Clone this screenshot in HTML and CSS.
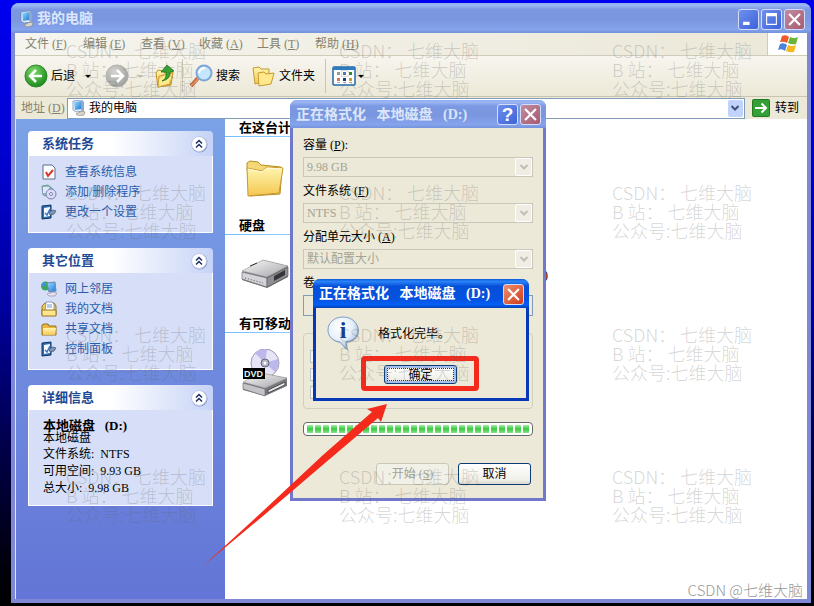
FILE: index.html
```html
<!DOCTYPE html>
<html lang="zh-CN">
<head>
<meta charset="UTF-8">
<title>我的电脑</title>
<link rel="stylesheet" href="styles.css">
</head>
<body>
<svg class="defs" width="0" height="0">
  <defs>
    <linearGradient id="paper" x1="0" y1="0" x2="0" y2="1"><stop offset="0" stop-color="#fff6b0"/><stop offset="1" stop-color="#f4c650"/></linearGradient>
    <linearGradient id="metal" x1="0" y1="0" x2="1" y2="1"><stop offset="0" stop-color="#fafafa"/><stop offset="1" stop-color="#a4a4a8"/></linearGradient>
    <linearGradient id="screen" x1="0" y1="0" x2="1" y2="1"><stop offset="0" stop-color="#9fe0ff"/><stop offset="1" stop-color="#1f78d8"/></linearGradient>
    <radialGradient id="green" cx=".4" cy=".3" r=".7"><stop offset="0" stop-color="#7fd86a"/><stop offset="1" stop-color="#1c8a1c"/></radialGradient>
    <radialGradient id="gray" cx=".4" cy=".3" r=".7"><stop offset="0" stop-color="#d4d4d0"/><stop offset="1" stop-color="#a0a09c"/></radialGradient>
    <radialGradient id="bubble" cx=".4" cy=".3" r=".7"><stop offset="0" stop-color="#fff"/><stop offset=".6" stop-color="#e6f0fa"/><stop offset="1" stop-color="#a4bfe0"/></radialGradient>
  </defs>
  <symbol id="computer" viewBox="0 0 16 16">
    <path d="M5 14l6-3 3 1-1 3-5 1z" fill="#d8d4cc" stroke="#8a8478" stroke-width=".6"/>
    <path d="M2 1l8-1 2 1v10l-7 1-3-2z" fill="#e8eef4" stroke="#6c86a8" stroke-width=".7"/>
    <path d="M3 2l7-1v8l-6 1z" fill="url(#screen)"/>
    <path d="M10 1l3 1v9l-3-1z" fill="#8fa8c8"/>
  </symbol>
  <symbol id="cross" viewBox="0 0 12 12"><path d="M1 1l10 10M11 1L1 11" stroke="#fff" stroke-width="2" fill="none"/></symbol>
  <symbol id="chevron" viewBox="0 0 10 10"><path d="M1.500 3L5 6.500 8.500 3" stroke="currentColor" stroke-width="2" fill="none"/></symbol>
  <symbol id="collapse" viewBox="0 0 18 18">
    <circle cx="9.500" cy="9.500" r="8" fill="#8a98c8"/>
    <circle cx="9" cy="9" r="7.500" fill="#fff" stroke="#c2cbe8"/>
    <path d="M6 8.500l3-3 3 3M6 12.500l3-3 3 3" stroke="#1c2f60" stroke-width="1.500" fill="none"/>
  </symbol>
  <symbol id="folder" viewBox="0 0 40 40">
    <path d="M2 10V6l3-2 8 1 3 3 20 2 1 2-2 25-30 2z" fill="#f4d878" stroke="#b88a20"/>
    <path d="M2 11l15 3 5-4 16 1-4 25-31 3z" fill="url(#paper)" stroke="#c89a30"/>
    <path d="M3 12l14 3 5-4 15 1" stroke="#fffbe0" fill="none"/>
  </symbol>
  <symbol id="control" viewBox="0 0 16 16">
    <path d="M1 2l9-1v13l-9 1z" fill="#2c6cb0" stroke="#12345c"/>
    <path d="M3 4l6-1v9l-6 1z" fill="#f4faff"/>
    <path d="M4 9l2 2 3-6" stroke="#3b78c8" stroke-width="1.500" fill="none"/>
    <path d="M8 8l4-2 3 1-2 3-4 1z" fill="#7d98b8" stroke="#3c4c64" stroke-width=".7"/>
  </symbol>
</svg>

<div class="window">
  <div class="titlebar">
    <svg class="title-icon"><use href="#computer"/></svg>
    <h1>我的电脑</h1>
    <button class="caption" aria-label="最小化"><svg viewBox="0 0 12 12"><path d="M1 9.500h6" stroke="#fff" stroke-width="3"/></svg></button>
    <button class="caption" aria-label="最大化"><svg viewBox="0 0 12 12"><path d="M1 1.500h10" stroke="#fff" stroke-width="3"/><path d="M1.500 1v9.500h9V1" stroke="#fff" fill="none"/></svg></button>
    <button class="caption close" aria-label="关闭"><svg><use href="#cross"/></svg></button>
  </div>

  <div class="menubar">
    <button>文件 (<u>F</u>)</button>
    <button>编辑 (<u>E</u>)</button>
    <button>查看 (<u>V</u>)</button>
    <button>收藏 (<u>A</u>)</button>
    <button>工具 (<u>T</u>)</button>
    <button>帮助 (<u>H</u>)</button>
    <div class="flag">
      <svg viewBox="0 0 20 18" width="20" height="18">
        <path d="M4 1q4-2 7 1l-2 6q-3-2-7-1z" fill="#ee5a2c"/>
        <path d="M12 2q4 2 8 0l-2 7q-4 1-8-1z" fill="#6cb436"/>
        <path d="M2 9q4-2 7 1l-2 6q-3-3-7-1z" fill="#4a82dc"/>
        <path d="M10 10q4 2 8 0l-2 7q-4 1-8-1z" fill="#f6b820"/>
      </svg>
    </div>
  </div>

  <div class="toolbar">
    <button class="tool back">
      <svg viewBox="0 0 24 24" width="24" height="24"><circle cx="12" cy="12" r="11" fill="url(#green)" stroke="#2f8a2c"/><path d="M18 12H7M12 6l-6 6 6 6" stroke="#fff" stroke-width="2.500" fill="none"/></svg>
      后退
    </button>
    <span class="drop"></span>
    <button class="tool forward" aria-label="前进">
      <svg viewBox="0 0 24 24" width="24" height="24"><circle cx="12" cy="12" r="11" fill="url(#gray)" stroke="#b0b0ac"/><path d="M6 12h11M12 6l6 6-6 6" stroke="#fff" stroke-width="2.500" fill="none"/></svg>
    </button>
    <span class="drop off"></span>
    <button class="tool up" aria-label="向上">
      <svg viewBox="0 0 22 24" width="22" height="24"><path d="M2 9l2-3 5 1 2 2 8-1-2 13-13 2z" fill="url(#paper)" stroke="#c09020"/><path d="M5 12l14-3-3 11-12 3z" fill="#ffe98c" stroke="#d0a030"/><path d="M8 17q5-2 4-9l-5 0 6-7 7 6-4 1q1 7-8 9z" fill="#35a62e" stroke="#1c701c" stroke-width=".8"/></svg>
    </button>
    <span class="rule"></span>
    <button class="tool search">
      <svg viewBox="0 0 24 24" width="24" height="24"><path d="M9 14l-7 8" stroke="#c4683a" stroke-width="4"/><path d="M10 14l-8 8" stroke="#e89a68" stroke-width="1.500"/><circle cx="15" cy="9" r="7.500" fill="#c4e6ff" stroke="#7ea6d8" stroke-width="2"/><path d="M10 9q1-5 6-5" stroke="#fff" stroke-width="2" fill="none"/></svg>
      搜索
    </button>
    <button class="tool folders">
      <svg viewBox="0 0 24 24" width="24" height="24"><path d="M1 4l6-1 2 2h8v11l-14 4z" fill="url(#paper)" stroke="#c09a30"/><path d="M6 9l6-1 2 2 8-1-3 11-12 2z" fill="#ffe98c" stroke="#c89a30"/></svg>
      文件夹
    </button>
    <span class="rule"></span>
    <button class="tool views" aria-label="查看">
      <svg viewBox="0 0 24 20" width="24" height="20">
        <rect x="1" y="1" width="22" height="18" rx="1" fill="#fff" stroke="#1e6aa8" stroke-width="1.500"/>
        <path d="M1 2.500h22" stroke="#2b7cc0" stroke-width="3"/>
        <path d="M5 7.500h3" stroke="#999" stroke-width="3"/><path d="M11 7.500h3" stroke="#4a7ab0" stroke-width="3"/><path d="M17 7.500h3" stroke="#2a8a3a" stroke-width="3"/>
        <path d="M5 13.500h3" stroke="#e07050" stroke-width="3"/><path d="M11 13.500h3" stroke="#163a8a" stroke-width="3"/><path d="M17 13.500h3" stroke="#c89a30" stroke-width="3"/>
        <path d="M5 16.500h3M11 16.500h3M17 16.500h3" stroke="#aaa"/>
      </svg>
    </button>
    <span class="drop"></span>
  </div>

  <div class="addressbar">
    <label for="address">地址 (<u>D</u>)</label>
    <div class="address">
      <svg><use href="#computer"/></svg>
      <input type="text" id="address" value="我的电脑">
      <button aria-label="展开"><svg width="10" height="10"><use href="#chevron"/></svg></button>
    </div>
    <button class="go">
      <svg viewBox="0 0 18 18" width="18" height="18"><rect x=".5" y=".5" width="17" height="17" rx="1" fill="#35a035" stroke="#1f7a22"/><path d="M3 9h11M9.500 4.500L14 9l-4.500 4.500" stroke="#fff" stroke-width="2" fill="none"/></svg>
      转到
    </button>
  </div>

  <div class="content">
    <div class="sidebar">
      <div class="panel">
        <h2>系统任务<svg width="18" height="18"><use href="#collapse"/></svg></h2>
        <ul>
          <li><svg viewBox="0 0 16 16"><path d="M2 1h9l3 3v11H2z" fill="#fdfdff" stroke="#5c6c8c"/><path d="M5 8l2 4 5-6" stroke="#d83a2a" stroke-width="2" fill="none"/></svg><a href="#">查看系统信息</a></li>
          <li><svg viewBox="0 0 16 16"><path d="M1 2l6-1 5 4-4 8-6-2z" fill="#8cc49c" stroke="#5c7c9c" stroke-width=".7"/><path d="M2 3h6v6H2z" fill="#e4e8ff"/><circle cx="10" cy="10" r="5" fill="#dcdcf8" stroke="#7880b0"/><circle cx="10" cy="10" r="1.500" fill="#fff" stroke="#7880b0"/></svg><a href="#">添加/删除程序</a></li>
          <li><svg><use href="#control"/></svg><a href="#">更改一个设置</a></li>
        </ul>
      </div>
      <div class="panel">
        <h2>其它位置<svg width="18" height="18"><use href="#collapse"/></svg></h2>
        <ul>
          <li><svg viewBox="0 0 16 16"><circle cx="4.500" cy="5" r="4.500" fill="#3aa860"/><path d="M0 5q2-4 5-4l-1 4z" fill="#4a90e0"/><path d="M6 2l8-1 1 9-7 1z" fill="url(#screen)" stroke="#6888b0"/><path d="M6 13l6-2 4 1-2 3H8z" fill="#e4e0f0" stroke="#8c88a0" stroke-width=".6"/></svg><a href="#">网上邻居</a></li>
          <li><svg viewBox="0 0 16 16"><path d="M1 5l3-3h9l2 3v9H1z" fill="#f0cc60" stroke="#9c7420"/><path d="M5 1h6l2 2v7H4z" fill="#fff" stroke="#6c88b0" stroke-width=".8"/><path d="M6 4h5M6 6h5" stroke="#6c9ad0"/><path d="M1 9h14v6H1z" fill="#ffe68c" stroke="#9c7420"/></svg><a href="#">我的文档</a></li>
          <li><svg viewBox="0 0 16 16"><path d="M1 4l2-1h4l1 2h7v9H1z" fill="#e8b840" stroke="#96701c"/><path d="M2 7h13l-1 7H2z" fill="url(#paper)"/></svg><a href="#">共享文档</a></li>
          <li><svg><use href="#control"/></svg><a href="#">控制面板</a></li>
        </ul>
      </div>
      <div class="panel">
        <h2>详细信息<svg width="18" height="18"><use href="#collapse"/></svg></h2>
        <div class="details">
          <strong>本地磁盘   (D:)</strong>
          <p class="kind">本地磁盘</p>
          <p>文件系统:  NTFS</p>
          <p>可用空间:  9.93 GB</p>
          <p>总大小:  9.98 GB</p>
        </div>
      </div>
    </div>

    <div class="files">
      <h3>在这台计</h3>
      <div class="group"><svg class="big folder" viewBox="0 0 40 40"><use href="#folder"/></svg></div>
      <h3>硬盘</h3>
      <div class="group">
        <svg class="big" viewBox="0 0 48 48">
          <path d="M1 21L22 9l25 6v11L26 37 1 29z" fill="#68686c"/>
          <path d="M1 20L22 9l25 6-21 11z" fill="url(#metal)" stroke="#a0a0a4" stroke-width=".7"/>
          <path d="M1 21l25 6v9L1 28z" fill="#d4d4d8" stroke="#77777c" stroke-width=".7"/>
          <path d="M26 27l21-11v9L26 36z" fill="#8e8e94" stroke="#5e5e62" stroke-width=".7"/>
          <path d="M33 25l11-6v5l-11 6z" fill="#34343a"/>
          <path d="M9 15l7-3" stroke="#333"/><path d="M4 27l18 5" stroke="#555" stroke-dasharray="1 2"/>
        </svg>
        <span class="drive-name">(D:)</span>
      </div>
      <h3>有可移动</h3>
      <div class="group">
        <svg class="big" viewBox="0 0 48 48">
          <circle cx="24" cy="14" r="14" fill="#e6e4f6" stroke="#9a98b4"/>
          <path d="M24 14L14 4q5-5 12-3zM24 14l10 9q5-6 3-13z" fill="#bdb8ec"/>
          <circle cx="24" cy="14" r="4" fill="#b4b4c4" stroke="#66667a"/><circle cx="24" cy="14" r="1.500" fill="#fff"/>
          <path d="M2 34l18-10 26 5v8L24 47 2 41z" fill="#7a7a7e"/>
          <path d="M2 33l18-9 26 5-22 10z" fill="url(#metal)" stroke="#a0a0a4" stroke-width=".7"/>
          <path d="M2 34l22 6v7L2 40z" fill="#c4c4c8" stroke="#6e6e74" stroke-width=".7"/>
          <path d="M27 41l17-8v3l-17 8z" fill="#e8e8ec" stroke="#4c4c50"/>
          <rect x="2" y="19" width="22" height="11" fill="#000"/>
          <text x="3" y="28" font-size="9" font-weight="bold" font-family="Liberation Sans" fill="#dff4f4">DVD</text>
        </svg>
      </div>
    </div>
  </div>
</div>

<div class="dialog format">
  <div class="titlebar">
    <h1>正在格式化   本地磁盘   (D:)</h1>
    <button class="caption help">?</button>
    <button class="caption close" aria-label="关闭"><svg><use href="#cross"/></svg></button>
  </div>
  <form>
    <label for="capacity">容量 (<u>P</u>):</label>
    <div class="combo"><select id="capacity" disabled><option>9.98 GB</option></select><span><svg width="10" height="10"><use href="#chevron"/></svg></span></div>
    <label for="fs">文件系统 (<u>F</u>)</label>
    <div class="combo"><select id="fs" disabled><option>NTFS</option></select><span><svg width="10" height="10"><use href="#chevron"/></svg></span></div>
    <label for="unit">分配单元大小 (<u>A</u>)</label>
    <div class="combo"><select id="unit" disabled><option>默认配置大小</option></select><span><svg width="10" height="10"><use href="#chevron"/></svg></span></div>
    <label for="volume">卷</label>
    <input type="text" id="volume" disabled>
    <fieldset>
      <input type="checkbox" aria-label="快速格式化" disabled>
      <input type="checkbox" aria-label="启用压缩" disabled>
      <input type="checkbox" aria-label="创建启动盘" disabled>
    </fieldset>
    <progress value="100" max="100"></progress>
    <div class="buttons">
      <button type="button" disabled>开始 (<u>S</u>)</button>
      <button type="button">取消</button>
    </div>
  </form>

  <div class="dialog alert">
    <div class="titlebar">
      <h1>正在格式化   本地磁盘   (D:)</h1>
      <button class="caption close" aria-label="关闭"><svg><use href="#cross"/></svg></button>
    </div>
    <div class="message">
      <svg viewBox="0 0 34 36" width="34" height="36">
        <path d="M16 2C7 2 2 8 2 15s5 11 12 12l7 8-1-8c7-1 12-5 12-12S25 2 16 2z" fill="#70757e" opacity=".6"/>
        <path d="M16 1C7 1 1 7 1 14s5 11 12 12l6 7v-7c7-1 12-5 12-12S25 1 16 1z" fill="url(#bubble)" stroke="#7f9cc4"/>
        <text x="16" y="22" text-anchor="middle" font-size="24" font-weight="bold" font-family="Liberation Serif" fill="#16408c">i</text>
      </svg>
      <p>格式化完毕。</p>
    </div>
    <div class="confirm"><button>确定</button></div>
  </div>
</div>

<!-- arrow pointing at the confirm button -->
<svg class="arrow" viewBox="0 0 186 162" width="186" height="162">
  <path d="M0 162L60 107 120 51 169 8l-5-3L184 0l-6 18-3-4L122 59 60 112z" fill="#f42a1c"/>
</svg>

<div class="watermarks" id="watermarks"></div>
<div class="signature">CSDN @七维大脑</div>

<script>
const marks = document.getElementById('watermarks');
for (let i = 0; i < 12; i++) {
  marks.innerHTML += '<p>CSDN： 七维大脑<br>B 站： 七维大脑<br>公众号:七维大脑</p>';
}
</script>
</body>
</html>
```
FILE: styles.css
```css
* {
  box-sizing: border-box;
}
body {
  margin: 0;
  height: 100vh;
  padding: 3px 3px 3px 11px;
  position: relative;
  overflow: hidden;
  background: linear-gradient(#0000f0 0%, #0000d0 25%, #0000a0 50%, #000050 72%, #000010 92%, #000 100%);
  font: 12px/16px "Liberation Serif", "Noto Sans CJK SC", serif;
  color: #000;
}
h1, h2, h3, p, ul, form {
  margin: 0;
  padding: 0;
}
button, input, select {
  font: inherit;
  color: inherit;
  margin: 0;
  padding: 0;
  border: 0;
  background: none;
}
svg {
  flex: none;
}
.defs {
  position: absolute;
}
.window {
  height: 100%;
  display: flex;
  flex-direction: column;
  padding: 0 4px 4px;
  background: #7f88d6;
  border-radius: 8px 8px 0 0;
  overflow: hidden;
}

/* title bars */
.titlebar {
  display: flex;
  align-items: center;
  gap: 2px;
  height: 30px;
  margin: 0 -4px;
  padding: 2px 6px 0 8px;
  background: linear-gradient(#8fb0f4 0%, #9ab6f4 8%, #7b98e2 22%, #7a96df 55%, #85a4ec 88%, #7392dc 100%);
}
.titlebar h1 {
  flex: 1;
  font-size: 14px;
  line-height: 20px;
  color: #dce6fa;
  white-space: pre;
}
.title-icon {
  width: 16px;
  height: 16px;
}
.caption {
  display: flex;
  align-items: center;
  justify-content: center;
  width: 21px;
  height: 21px;
  border: 1px solid #d4defa;
  border-radius: 3px;
  background: linear-gradient(135deg, #6f90ee, #3c62d8);
}
.caption svg {
  width: 13px;
  height: 13px;
}
.caption.close {
  background: linear-gradient(135deg, #c08ca0, #a85a70);
}
.caption.help {
  font: bold 19px/19px "Liberation Sans", sans-serif;
  color: #fff;
}

/* bars */
.menubar {
  display: flex;
  gap: 16px;
  height: 23px;
  padding-left: 10px;
  background: linear-gradient(90deg, #f5f4ee, #ebe8d8);
  border-bottom: 1px solid #d0ccba;
  color: #85836f;
}
.menubar button {
  width: 42px;
  text-align: left;
  white-space: nowrap;
}
.flag {
  display: flex;
  align-items: center;
  justify-content: center;
  width: 40px;
  margin-left: auto;
  background: #fff;
  border-left: 1px solid #d0ccba;
}
.toolbar {
  display: flex;
  align-items: center;
  height: 41px;
  padding-left: 9px;
  background: linear-gradient(#f7f5ee, #ece9d8);
  border-bottom: 1px solid #c8c4b0;
}
.tool {
  display: flex;
  align-items: center;
  gap: 3px;
  white-space: nowrap;
}
.drop {
  border: 3px solid transparent;
  border-top-color: #000;
  border-bottom: 0;
  margin: 0 14px 0 10px;
}
.drop.off {
  border-top-color: #c0bcac;
  margin: 0 11px 0 8px;
}
.rule {
  width: 1px;
  height: 34px;
  margin: 0 6px;
  background: #cac6b4;
}
.folders {
  margin: 0 4px 0 12px;
}
.views + .drop {
  margin-left: 2px;
}
.addressbar {
  display: flex;
  align-items: center;
  height: 22px;
  padding: 0 8px 0 6px;
  background: #ece9d8;
}
.addressbar label {
  width: 46px;
  color: #85836f;
}
.address {
  flex: 1;
  display: flex;
  align-items: center;
  height: 21px;
  padding: 0 1px 0 3px;
  background: #fff;
  border: 1px solid #7f9db9;
}
.address > svg {
  width: 16px;
  height: 16px;
}
.address input {
  flex: 1;
  min-width: 0;
  padding-left: 2px;
}
.address button {
  display: flex;
  align-items: center;
  justify-content: center;
  width: 15px;
  height: 17px;
  border-radius: 2px;
  background: #c1d3fb;
  color: #3c5078;
}
.go {
  display: flex;
  align-items: center;
  gap: 5px;
  margin-left: 7px;
}

/* side panels */
.content {
  flex: 1;
  display: flex;
  min-height: 0;
  background: #fff;
}
.sidebar {
  width: 210px;
  padding: 12px 12px 0;
  display: flex;
  flex-direction: column;
  gap: 15px;
  background: linear-gradient(#7ba2e7, #6375d6);
  border-left: 1px solid #dfe5fa;
}
.panel h2 {
  display: flex;
  align-items: center;
  justify-content: space-between;
  height: 25px;
  padding: 0 5px 0 14px;
  border-radius: 4px 4px 0 0;
  background: linear-gradient(90deg, #fff 45%, #c6d3f7);
  font-size: 13px;
  color: #1c4a94;
}
.panel ul, .details {
  border: 1px solid #fff;
  border-top: 0;
  background: #d6dff7;
}
.panel ul {
  list-style: none;
  padding: 6px 12px 10px;
}
.panel li {
  display: flex;
  align-items: center;
  gap: 8px;
  height: 20px;
}
.panel li svg {
  width: 16px;
  height: 16px;
}
.panel a {
  color: #2a5caa;
  text-decoration: none;
}
.details {
  padding: 10px 14px 8px;
  line-height: 17px;
}
.details strong, .details p {
  display: block;
  white-space: pre;
}
.details strong {
  font-size: 13px;
  line-height: 12px;
}
.details .kind {
  line-height: 12px;
  margin-bottom: 2px;
}

/* file groups */
.files {
  flex: 1;
}
.files h3 {
  height: 18px;
  padding-left: 14px;
  font-size: 13px;
  line-height: 18px;
  background: linear-gradient(90deg, #70bfff, #fff 320px) bottom / 100% 1px no-repeat;
}
.group {
  display: flex;
  align-items: center;
  height: 80px;
  padding-left: 16px;
}
.big {
  width: 48px;
  height: 48px;
}
.big.folder {
  width: 40px;
  height: 40px;
  margin-left: 4px;
}
.drive-name {
  margin-left: 239px;
}

/* dialogs */
.dialog {
  position: absolute;
  background: #ece9d8;
  border: 3px solid #7078cc;
  border-top: 0;
  border-radius: 7px 7px 0 0;
}
.dialog .titlebar {
  height: 28px;
  margin: 0 -3px;
  padding: 1px 5px 0 6px;
  border-radius: 7px 7px 0 0;
}
.format {
  left: 290px;
  top: 100px;
  width: 256px;
}
.format form {
  padding: 9px 10px 13px;
}
.format label {
  display: block;
  margin-bottom: 4px;
}
.combo {
  display: flex;
  height: 20px;
  margin-bottom: 6px;
  border: 1px solid #c9c7ba;
}
.combo select {
  flex: 1;
  padding-left: 3px;
  appearance: none;
  opacity: 1;
  color: #a5a392;
}
.combo span {
  display: flex;
  align-items: center;
  justify-content: center;
  width: 17px;
  border: 1px solid #fff;
  border-radius: 2px;
  background: #f0eee4;
  color: #c0beb0;
}
#volume {
  display: block;
  width: 100%;
  height: 21px;
  border: 1px solid #7f9db9;
}
.format fieldset {
  display: flex;
  flex-direction: column;
  gap: 5px;
  height: 76px;
  margin: 17px 0 13px;
  padding: 16px 6px 0;
  border: 1px solid #d0d0bf;
  border-radius: 4px;
}
.format fieldset input {
  appearance: none;
  width: 13px;
  height: 13px;
  border: 1px solid #b8c4c8;
  background: #f6f5ee;
}
progress {
  display: block;
  appearance: none;
  width: 100%;
  height: 14px;
  padding: 2px 3px;
  border: 1px solid #686868;
  border-radius: 4px;
  background: #fff;
}
progress::-webkit-progress-bar {
  background: #fff;
}
progress::-webkit-progress-value {
  background:
    repeating-linear-gradient(90deg, transparent 0 6px, #fff 6px 8px),
    linear-gradient(#a8eaa8, #35cc3c 50%, #8be28b);
}
.buttons {
  display: flex;
  justify-content: flex-end;
  gap: 9px;
  margin-top: 27px;
  padding-right: 2px;
}
.buttons button, .confirm button {
  width: 73px;
  height: 22px;
  border: 1px solid #0c3c74;
  border-radius: 3px;
  background: linear-gradient(#fff, #f0f0ea 80%, #dcd8cc);
}
.buttons button:disabled {
  border-color: #cbc8ba;
  background: #f2f1e8;
  color: #a5a392;
}
.alert {
  left: 20px;
  top: 179px;
  width: 216px;
  border-color: #0838b8;
}
.alert .titlebar {
  height: 29px;
  background: linear-gradient(#0a58d8 0%, #2a84f8 8%, #0550d8 25%, #0552e0 70%, #0460f4 88%, #0340b8 100%);
}
.alert .titlebar h1 {
  color: #fff;
}
.alert .caption.close {
  background: linear-gradient(135deg, #ee9070, #d03c18);
}
.message {
  display: flex;
  align-items: center;
  gap: 17px;
  padding: 8px 11px 4px;
}
.confirm {
  width: 118px;
  height: 35px;
  margin: 0 auto 7px 45px;
  padding: 4px 0 0 18px;
  border: 5px solid #f42a1c;
  border-radius: 4px;
}
.confirm button {
  display: block;
  height: 19px;
  box-shadow: inset 0 0 0 2px #a8c0f0;
  outline: 1px dotted #333;
  outline-offset: -4px;
  line-height: 16px;
}

/* overlays */
.arrow {
  position: absolute;
  left: 203px;
  top: 404px;
}
.watermarks {
  position: absolute;
  left: 66px;
  right: 0;
  top: 41px;
  display: grid;
  grid-template-columns: 273px 273px 1fr;
  grid-auto-rows: 142px;
  font: 300 18px/19px "Noto Sans CJK SC", sans-serif;
  color: rgba(100, 100, 100, .27);
  pointer-events: none;
}
.signature {
  position: absolute;
  right: 11px;
  bottom: 6px;
  font: 300 15px/20px "Noto Sans CJK SC", sans-serif;
  color: #999;
}
```
